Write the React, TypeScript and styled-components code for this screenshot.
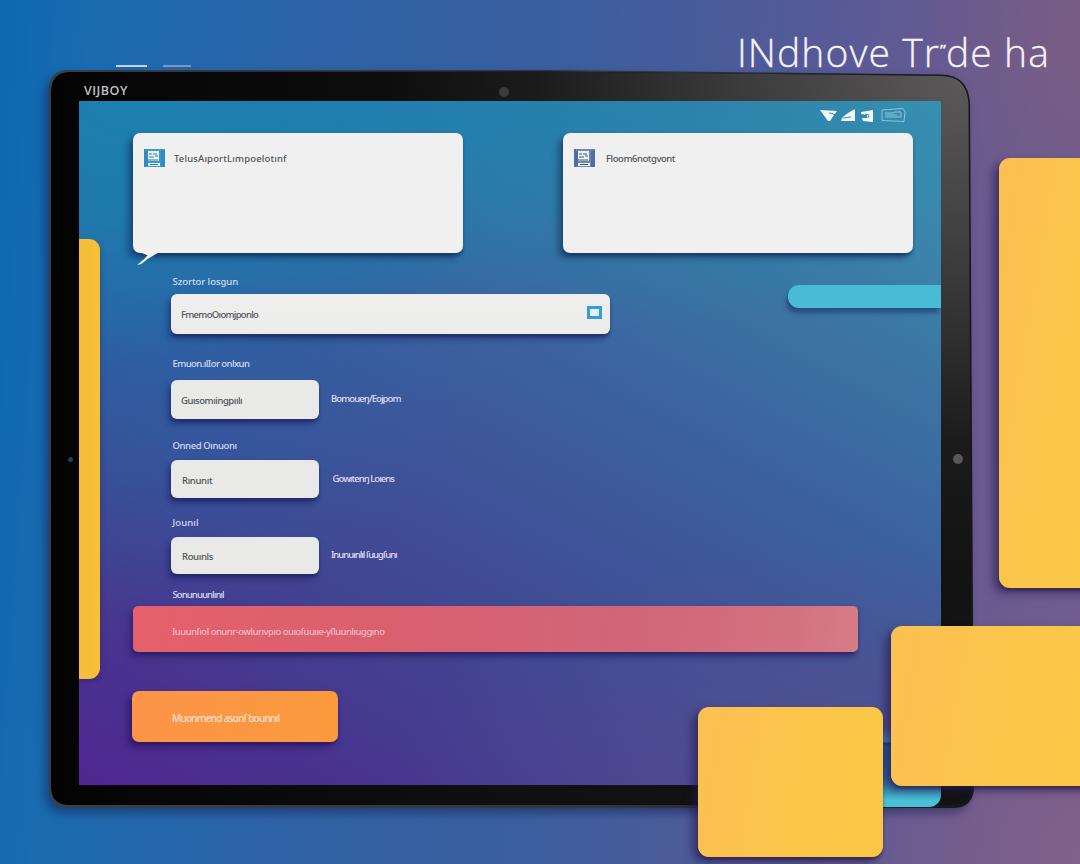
import React from "react";
import styled, { createGlobalStyle } from "styled-components";

const GlobalStyle = createGlobalStyle`
  * { box-sizing: border-box; }
  html, body { margin: 0; padding: 0; }
  body { width: 1080px; height: 864px; overflow: hidden; font-family: "Open Sans", "Noto Sans", sans-serif; }
`;

const Stage = styled.main`
  position: relative;
  width: 1080px;
  height: 864px;
  overflow: hidden;
  background:
    radial-gradient(ellipse 220px 280px at 1080px 864px, rgba(134, 98, 136, 0.8), transparent),
    radial-gradient(ellipse 160px 240px at 1080px 40px, rgba(124, 94, 128, 0.75), transparent),
    linear-gradient(94deg, #0d69b1 0%, #1b6bb0 9%, #2d62a6 28%, #3b5f9f 50%, #535a98 70%, #665a91 84%, #705b8e 100%);
`;

const Header = styled.header`
  display: flex;
  justify-content: flex-end;
  height: 70px;
  padding: 25px 30px 0 0;
`;

const Title = styled.h1`
  display: flex;
  margin: 0;
  color: #f5f2fb;
  font: 300 39px/53px "Open Sans", "Noto Sans", sans-serif;
  letter-spacing: 1.1px;
  white-space: pre;
  -webkit-text-stroke: 0.3px #f5f2fb;
`;

const Tick = styled.span`
  font-size: 15px;
  font-weight: 600;
  line-height: 48px;
  letter-spacing: 0;
`;

const Tablet = styled.section`
  position: relative;
  width: 924px;
  height: 738px;
  margin-left: 49px;
  padding: 0 32px 23px 30px;
`;

const Casing = styled.div`
  position: absolute;
  inset: 0;
  filter: drop-shadow(-4px 5px 5px rgba(12, 28, 75, 0.5));
`;

const Rim = styled.div`
  position: absolute;
  inset: 0 -2px 0 0;
  background: linear-gradient(90deg, #3a3f47, #33363c 60%, #17171a);
  clip-path: path("M20 0 L500 0 L892 4.5 Q920 5 921 34 L925 716 Q925 738 904 738 L20 738 Q0 738 0 718 L0 20 Q0 0 20 0 Z");
`;

const Bezel = styled(Rim)`
  background:
    radial-gradient(ellipse 580px 500px at 921px 0, #5c5a5b 0%, #3c3b3b 40%, #1c1b1b 75%, transparent 100%),
    linear-gradient(90deg, #030303, #070707 10%, #101010 50%, #131313);
  clip-path: path("M22 2 L500 1.5 L892 6 Q918 6 919.5 34 L923 716 Q923 734 903 735 L20 735 Q2 735 2 716 L2 22 Q2 2 22 2 Z");
`;

const SideKeys = styled.div`
  position: absolute;
  left: 67px;
  top: -5px;
  display: flex;
  gap: 16px;
`;

const Key = styled.i<{ $width: number; $tone: string }>`
  width: ${(p) => p.$width}px;
  height: 3px;
  border-top: 2px solid ${(p) => p.$tone};
`;

const Lens = styled.i<{ $x: number; $y: number; $size: number; $tone: string }>`
  position: absolute;
  left: ${(p) => p.$x}px;
  top: ${(p) => p.$y}px;
  width: ${(p) => p.$size}px;
  height: ${(p) => p.$size}px;
  border-radius: 50%;
  background: ${(p) => p.$tone};
`;

const BrandBar = styled.div`
  position: relative;
  height: 31px;
  padding: 12px 0 0 5px;
  color: #c2c2c6;
  font: 600 12.5px/17px "Open Sans", sans-serif;
  letter-spacing: 0.5px;
`;

const Screen = styled.div`
  position: relative;
  width: 862px;
  height: 684px;
  padding: 0 28px 0 54px;
  background:
    radial-gradient(ellipse 460px 260px at 60px 0, #1b80b0, rgba(27, 128, 176, 0.75) 45%, rgba(27, 128, 176, 0)),
    radial-gradient(ellipse 380px 330px at 40px 190px, rgba(34, 104, 170, 0.75), rgba(34, 104, 170, 0)),
    radial-gradient(ellipse 640px 230px at 480px 0, rgba(34, 130, 172, 0.85), rgba(34, 130, 172, 0)),
    radial-gradient(ellipse 480px 240px at 800px 684px, rgba(88, 80, 144, 0.85), rgba(88, 80, 144, 0)),
    linear-gradient(28deg, #4f2790 0%, #48348f 14%, #424592 30%, #3e5799 48%, #3b67a0 64%, #3b7ba6 80%, #4297b3 100%);
`;

const StatusBar = styled.div`
  display: flex;
  justify-content: flex-end;
  height: 32px;
  padding: 5px 5px 0 0;
`;

const CardRow = styled.div`
  display: grid;
  grid-template-columns: 330px 350px;
  column-gap: 100px;
`;

const Card = styled.article`
  position: relative;
  display: flex;
  align-items: flex-start;
  gap: 9px;
  height: 120px;
  padding: 15px 11px;
  border-radius: 7px;
  background: #f0f0f0;
  box-shadow: -5px 5px 6px rgba(18, 42, 92, 0.5), 0 3px 3px rgba(18, 42, 82, 0.5);
  svg { flex: none; }
`;

const Tail = styled.i`
  position: absolute;
  left: 4px;
  top: 118px;
  width: 24px;
  height: 14px;
  background: #f0f0f0;
  clip-path: polygon(14% 10%, 100% 0, 44% 58%, 18% 92%, 0 100%, 28% 60%, 44% 30%);
`;

const Caption = styled.span<{ $track: number; $tone?: string; $size?: number; $shift?: number }>`
  color: ${(p) => p.$tone ?? "#505357"};
  font: 500 ${(p) => p.$size ?? 9.5}px/20px "Noto Sans", "Open Sans", sans-serif;
  letter-spacing: ${(p) => p.$track}px;
  white-space: pre;
  margin-top: ${(p) => p.$shift ?? 1}px;
`;

const Form = styled.form`
  display: flex;
  flex-direction: column;
  align-items: flex-start;
`;

const Label = styled.label<{ $height: number; $line: number; $track: number }>`
  display: flex;
  align-items: flex-end;
  height: ${(p) => p.$height}px;
  margin-left: 39.5px;
  color: #d5dcf3;
  font: 500 9.5px/${(p) => p.$line}px "Noto Sans", "Open Sans", sans-serif;
  letter-spacing: ${(p) => p.$track}px;
  white-space: pre;
`;

const FieldRow = styled.div`
  display: flex;
  align-items: center;
  gap: 12px;
  margin-left: 38px;
`;

const Field = styled.div<{ $width: number; $height: number; $pad?: number }>`
  display: flex;
  align-items: center;
  justify-content: space-between;
  width: ${(p) => p.$width}px;
  height: ${(p) => p.$height}px;
  padding: 1px 8px 0 ${(p) => p.$pad ?? 10}px;
  border-radius: 6px;
  background: #e9e9e8;
  box-shadow: -3px 5px 6px rgba(24, 25, 90, 0.45), 0 3px 3px rgba(24, 25, 80, 0.4);
  svg { margin-top: -4px; }
`;

const WideField = styled(Field)`
  background: linear-gradient(180deg, #f0efee, #ececec);
`;

const Alert = styled.div`
  display: flex;
  align-items: center;
  width: 725px;
  height: 46px;
  padding: 5px 0 0 39px;
  border-radius: 5px;
  background: linear-gradient(100deg, #e5606b 0%, #da606e 35%, #d0667a 70%, #d4727f 90%, #d67c86 100%);
  box-shadow: -3px 5px 6px rgba(34, 20, 88, 0.5), 0 2px 3px rgba(34, 20, 78, 0.4);
`;

const Action = styled.button`
  display: flex;
  align-items: center;
  width: 206px;
  height: 51px;
  margin: 39px 0 0 -1px;
  padding: 1px 0 0 40px;
  border: 0;
  border-radius: 7px;
  background: linear-gradient(100deg, #fd9449, #fa9a3c);
  box-shadow: -4px 5px 7px rgba(40, 14, 92, 0.6), 0 2px 3px rgba(40, 14, 70, 0.4);
`;

const EdgeTab = styled.div`
  position: absolute;
  left: 0;
  top: 138px;
  width: 21px;
  height: 440px;
  border-radius: 0 11px 11px 0;
  background: linear-gradient(90deg, #f5bd3d, #f6c136);
  box-shadow: 1px 3px 4px rgba(40, 30, 100, 0.35);
`;

const Pill = styled.div`
  position: absolute;
  right: 0;
  top: 184px;
  width: 153px;
  height: 23px;
  border-radius: 11px 0 0 11px;
  background: #48bbd7;
  box-shadow: -2px 5px 4px rgba(30, 50, 110, 0.6);
  clip-path: inset(-2px 0 -14px -10px);
`;

const CornerPiece = styled.div`
  position: absolute;
  left: 826px;
  top: 727px;
  width: 115px;
  height: 80px;
  border-radius: 0 0 12px 0;
  background: linear-gradient(180deg, rgba(71, 127, 198, 0) 0, #477fc6 13px 15px, #1e3f73 16px, #2b539a 19px, #2c5fa3 48px, #368eb8 62px, #49c0d5 73px);
`;

const Tile = styled.div<{ $x: number; $y: number; $w: number; $h: number }>`
  position: absolute;
  left: ${(p) => p.$x}px;
  top: ${(p) => p.$y}px;
  width: ${(p) => p.$w}px;
  height: ${(p) => p.$h}px;
  border-radius: 11px;
  background: linear-gradient(100deg, #fbc052 0%, #fbc64a 55%, #fac744 100%);
  box-shadow: -6px 5px 8px rgba(34, 24, 74, 0.55), 0 3px 3px rgba(50, 30, 60, 0.5);
`;

const DocIcon = ({ tone, deep }: { tone: string; deep: string }) => (
  <svg width="21" height="20" viewBox="0 0 21 20">
    <path fill={tone} d="M0 1h21v18H0z" />
    <path fill={deep} d="M0 1h2v18H0zM17 2h4v17h-4z" opacity=".5" />
    <path fill="#eef3f5" d="M4 3h11v10H4zM4 15h12v3H4z" />
    <path stroke={deep} strokeWidth="1" fill="none" d="M5 6h3m1 0h4M5 9h5m1-1h3M4 12h10M6 16.5h8M3 3v15" />
  </svg>
);

const StatusIcons = () => (
  <svg width="88" height="20" viewBox="820 106 88 20">
    <g fill="#f1f9fc">
      <path d="M820 110l17 1-2 3h-3l2 1-4 6h-2z" />
      <path d="M841 121c1-5 7-8 14-12v12z" />
      <path d="M861 112l12-2v12l-10-1-1-3h5v-3l-6-1z" />
    </g>
    <path fill="none" stroke="#3590b8" d="M829 113l4 .5M843 118l8-1M865 114l4 1-1 3" />
    <g fill="none" stroke="#8cc6dc" strokeWidth="1">
      <path d="M882 110l21-1.5 2 3-1 10-22-1z" />
      <path d="M885 113h8l2-1h6v5h-16M885 115h12" />
    </g>
  </svg>
);

const SquareIcon = () => (
  <svg width="15" height="13" viewBox="0 0 15 13">
    <rect width="15" height="13" fill="#2f9fe2" />
    <rect x="3" y="3" width="9" height="7" fill="#e4f2f9" />
  </svg>
);

const LIGHT = "#e0def3";

export default function App() {
  return (
    <>
      <GlobalStyle />
      <Stage>
        <Header>
          <Title><span>INdhove Tr</span><Tick>”</Tick><span>de ha</span></Title>
        </Header>
        <Tablet>
          <SideKeys>
            <Key $width={31} $tone="#c9d5e8" />
            <Key $width={28} $tone="#8397bf" />
          </SideKeys>
          <Casing>
            <Rim />
            <Bezel />
          </Casing>
          <Lens $x={450} $y={17} $size={10} $tone="#3c3c3e" />
          <Lens $x={19} $y={387} $size={5} $tone="#2b3b58" />
          <Lens $x={904} $y={384} $size={10} $tone="#5a5657" />
          <BrandBar>VIJBOY</BrandBar>
          <Screen>
            <EdgeTab />
            <Pill />
            <StatusBar><StatusIcons /></StatusBar>
            <CardRow>
              <Card>
                <DocIcon tone="#3d9dc8" deep="#2380b0" />
                <Caption $track={0.15}>TelusAıportLımpoelotınf</Caption>
                <Tail />
              </Card>
              <Card>
                <DocIcon tone="#6e86b8" deep="#3a5288" />
                <Caption $track={-0.45}> Floom6notgvont</Caption>
              </Card>
            </CardRow>
            <Form>
              <Label $height={41} $line={24} $track={-0.05}>Szortor losgun</Label>
              <FieldRow>
                <WideField $width={439} $height={40}>
                  <Caption $track={-0.7}>FmemoOıomjponlo</Caption>
                  <SquareIcon />
                </WideField>
              </FieldRow>
              <Label $height={46} $line={32} $track={-0.55}>Emuon.ılIor onlxun</Label>
              <FieldRow>
                <Field $width={148} $height={39}>
                  <Caption $track={-0.45} $shift={2}>Guısomıingpıılı</Caption>
                </Field>
                <Caption $track={-0.9} $tone={LIGHT} $shift={-1}>Bomoueŋ/Eojpom</Caption>
              </FieldRow>
              <Label $height={41} $line={28} $track={-0.4}>Onned Oınuonı</Label>
              <FieldRow>
                <Field $width={148} $height={38} $pad={11}>
                  <Caption $track={-0.35} $shift={2}>Rınunıt</Caption>
                </Field>
                <Caption $track={-0.95} $tone={LIGHT} $shift={-1}> Gowıtenŋ Loıens</Caption>
              </FieldRow>
              <Label $height={39} $line={28} $track={0.1}>Jounıl</Label>
              <FieldRow>
                <Field $width={148} $height={37} $pad={11}>
                  <Caption $track={-0.35}>Rouınls</Caption>
                </Field>
                <Caption $track={-1} $tone={LIGHT} $shift={-2}>Inunuınlıl ſuugſunı</Caption>
              </FieldRow>
              <Label $height={32} $line={22} $track={-0.9}>Sonunuunlınıl</Label>
              <Alert>
                <Caption $track={-0.52} $tone="#f5bcc8">Iuuunſıol onunr-owlurıvpıo ouıoſuuııe-yſluunlıuggıno</Caption>
              </Alert>
              <Action type="button">
                <Caption $track={-0.75} $tone="#fde0cf" $size={10}>Muonrnend asonſ bounnıl</Caption>
              </Action>
            </Form>
          </Screen>
        </Tablet>
        <CornerPiece />
        <Tile $x={999} $y={158} $w={110} $h={430} />
        <Tile $x={891} $y={626} $w={220} $h={160} />
        <Tile $x={697.5} $y={707} $w={185} $h={150} />
      </Stage>
    </>
  );
}
